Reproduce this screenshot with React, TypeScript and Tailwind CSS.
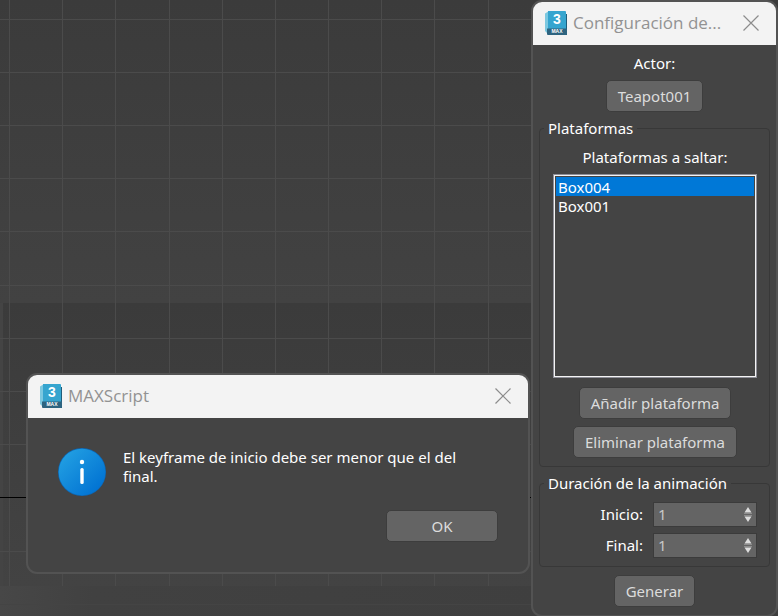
import { useState } from "react";
import type { ReactNode } from "react";

const columns = [9, 62, 115, 169, 222, 275, 328, 381, 434, 488, 541, 594, 647, 700, 753];
const rows = [19, 72, 125, 178, 231, 285, 338, 391, 444, 551];

function Viewport() {
  return (
    <svg className="absolute inset-0 h-full w-full" aria-hidden="true" shapeRendering="crispEdges">
      <defs>
        <linearGradient id="sky" x1="0" y1="0" x2="0" y2="1">
          <stop offset="0" stopColor="#3b3b3b" />
          <stop offset="1" stopColor="#424242" />
        </linearGradient>
        <linearGradient id="shade" x1="0" y1="0" x2="0" y2="1">
          <stop offset="0" stopColor="#3b3b3b" />
          <stop offset="1" stopColor="#434343" />
        </linearGradient>
        <linearGradient id="ground" x1="0" y1="0" x2="1" y2="0">
          <stop offset="0" stopColor="#474747" />
          <stop offset="0.12" stopColor="#414141" />
          <stop offset="1" stopColor="#3e3e3e" />
        </linearGradient>
      </defs>
      <rect width="100%" height="100%" fill="#444444" />
      <rect width="100%" height="303" fill="url(#sky)" />
      <rect x="3" y="303" width="100%" height="283" fill="url(#shade)" />
      <rect y="586" width="100%" height="100%" fill="url(#ground)" />
      {columns.map((x) => (
        <rect key={x} x={x} width="1" height="586" fill="#4b4b4b" />
      ))}
      {rows.map((y) => (
        <rect key={y} y={y} width="100%" height="1" fill="#4b4b4b" />
      ))}
      <rect y="604" width="100%" height="1" fill="#444444" />
      <rect y="497" width="100%" height="1" fill="#000000" />
    </svg>
  );
}

function MaxLogo() {
  return (
    <svg width="22" height="24" viewBox="0 0 22 24" className="shrink-0" aria-hidden="true">
      <path d="M0 2.5 4 0v18H2v4L0 20z" fill="#7cc8e0" />
      <path d="M19 3h3v21h-3z" fill="#1f5d7a" />
      <path d="M3 0h17a1 1 0 0 1 1 1v17H3z" fill="#36a5cf" />
      <path d="M2 17.500h20V23a1 1 0 0 1-1 1H3a1 1 0 0 1-1-1z" fill="#2e6480" />
      <text x="12" y="13" textAnchor="middle" fontFamily="Liberation Sans, sans-serif" fontWeight="700" fontSize="14" fill="#fff">
        3
      </text>
      <text x="12" y="22" textAnchor="middle" fontFamily="Liberation Sans, sans-serif" fontWeight="700" fontSize="5" fill="#fff">
        MAX
      </text>
    </svg>
  );
}

function TitleBar({ title }: { title: string }) {
  return (
    <header className="flex h-[43px] items-center gap-[6px] rounded-t-[9px] bg-[#f3f3f3] pr-[17px] pb-[2px] pl-3">
      <MaxLogo />
      <h1 className="flex-1 font-['Open_Sans',sans-serif] text-[17px] leading-6 whitespace-nowrap text-[#929292]">{title}</h1>
      <button type="button" aria-label="Cerrar" className="shrink-0">
        <svg width="16" height="16" viewBox="0 0 16 16" stroke="#8c8c8c" strokeWidth="1.200" aria-hidden="true">
          <path d="M.5.5l15 15M15.500.5l-15 15" />
        </svg>
      </button>
    </header>
  );
}

function PushButton({ children, wide = false }: { children: ReactNode; wide?: boolean }) {
  return (
    <button
      type="button"
      className={`h-8 rounded-[5px] border border-[#3d3d3d] bg-[#646464] text-[#dcdcdc] ${wide ? "w-28" : "px-[11px]"}`}
    >
      {children}
    </button>
  );
}

function Spinner({ id, label }: { id: string; label: string }) {
  const [value, setValue] = useState(1);
  return (
    <div className="flex items-center justify-end gap-[10px]">
      <label htmlFor={id}>{label}</label>
      <div className="flex h-[25px] w-26 items-center border border-[#3b3b3b] bg-[#646464] pr-1">
        <input
          id={id}
          value={value}
          onChange={(e) => setValue(Number(e.target.value) || 0)}
          inputMode="numeric"
          className="min-w-0 flex-1 pl-1 text-[#c8c8c8] outline-none"
        />
        <div className="flex flex-col gap-px">
          <button type="button" aria-label={`Aumentar ${label}`} onClick={() => setValue(value + 1)}>
            <svg width="8" height="7" viewBox="0 0 8 7" fill="#dedede" className="block" aria-hidden="true">
              <path d="M4 0l3.500 5.500h-7z" />
              <path d="M0 6h8v1H0z" fill="#8d8d8d" />
            </svg>
          </button>
          <button type="button" aria-label={`Reducir ${label}`} onClick={() => setValue(value - 1)}>
            <svg width="8" height="7" viewBox="0 0 8 7" fill="#dedede" className="block" aria-hidden="true">
              <path d="M0 0h8v1H0z" fill="#8d8d8d" />
              <path d="M4 7L.5 1.500h7z" />
            </svg>
          </button>
        </div>
      </div>
    </div>
  );
}

function MessageWindow() {
  return (
    <section className="absolute top-[373px] left-[26px] w-[504px] rounded-[11px] border-2 border-[#535353] bg-[#444444]">
      <TitleBar title="MAXScript" />
      <div className="flex items-center gap-[17px] px-[30px] pt-[30px]">
        <svg width="48" height="48" viewBox="0 0 48 48" className="shrink-0" aria-hidden="true">
          <defs>
            <linearGradient id="info" x1="0" y1="0" x2="1" y2="1">
              <stop offset="0.1" stopColor="#229fe2" />
              <stop offset="0.9" stopColor="#0071d2" />
            </linearGradient>
          </defs>
          <circle cx="24" cy="24" r="24" fill="#0b68b8" />
          <circle cx="24" cy="24" r="23.300" fill="url(#info)" />
          <circle cx="24" cy="14" r="2.200" fill="#fff" />
          <rect x="22.300" y="20" width="3.400" height="16" rx="1.500" fill="#fff" />
        </svg>
        <p className="w-[350px] self-start">El keyframe de inicio debe ser menor que el del final.</p>
      </div>
      <div className="flex justify-end px-[30px] pt-[14px] pb-[30px]">
        <PushButton wide>OK</PushButton>
      </div>
    </section>
  );
}

function SettingsWindow() {
  return (
    <section className="absolute top-0 left-[531px] w-[247px] rounded-[11px] border-2 border-[#535353] bg-[#444444]">
      <TitleBar title="Configuración de..." />
      <div className="flex flex-col items-center px-[6px] pt-[9px] pb-2">
        <p>Actor:</p>
        <div className="pt-[7px] pb-[7px]">
          <PushButton>Teapot001</PushButton>
        </div>
        <fieldset className="w-full rounded-[4px] border border-[#383838] pr-3 pb-2 pl-[13px]">
          <legend className="-ml-[9px] px-1">Plataformas</legend>
          <div className="flex flex-col items-center gap-[7px] pt-[10px]">
            <label htmlFor="platforms">Plataformas a saltar:</label>
            <select
              id="platforms"
              size={10}
              defaultValue="Box004"
              className="h-[204px] w-full overflow-hidden border-2 border-[#f4f4f4] p-px outline outline-[#8f8f98] -outline-offset-1"
            >
              <option className="h-[19px] min-h-0 px-[2px] py-0 text-white checked:bg-linear-to-r checked:from-[#0078d7] checked:to-[#0078d7]">
                Box004
              </option>
              <option className="h-[19px] min-h-0 px-[2px] py-0 text-white checked:bg-linear-to-r checked:from-[#0078d7] checked:to-[#0078d7]">
                Box001
              </option>
            </select>
            <div className="flex flex-col items-center gap-[7px] pt-[2px]">
              <PushButton>Añadir plataforma</PushButton>
              <PushButton>Eliminar plataforma</PushButton>
            </div>
          </div>
        </fieldset>
        <fieldset className="mt-[7px] w-full rounded-[4px] border border-[#383838] pr-3 pb-2 pl-[13px]">
          <legend className="-ml-[9px] px-1">Duración de la animación</legend>
          <div className="flex flex-col gap-[6px] pt-[9px]">
            <Spinner id="start" label="Inicio:" />
            <Spinner id="end" label="Final:" />
          </div>
        </fieldset>
        <div className="pt-2">
          <PushButton>Generar</PushButton>
        </div>
      </div>
    </section>
  );
}

export default function App() {
  return (
    <main className="relative h-screen w-full overflow-hidden bg-[#404040] font-['Noto_Sans',sans-serif] text-[15px] leading-[19px] text-white">
      <Viewport />
      <MessageWindow />
      <SettingsWindow />
    </main>
  );
}
